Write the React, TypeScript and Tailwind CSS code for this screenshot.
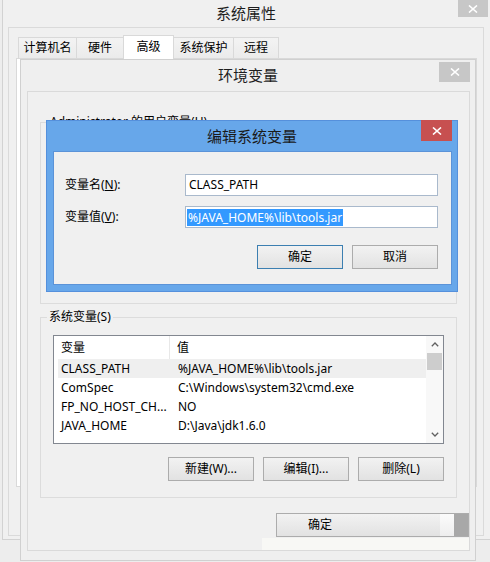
import React from 'react';

const font = "font-['Noto_Sans','Noto_Sans_CJK_SC',sans-serif]";

const CloseX = () => (
  <svg width="10" height="8" viewBox="0 0 10 8">
    <path d="M1 0.5 L9 7.5 M9 0.5 L1 7.5" stroke="#ffffff" strokeWidth="1.6" />
  </svg>
);

const ChevronUp = () => (
  <svg width="8" height="5" viewBox="0 0 8 5">
    <path d="M0.8 4.2 L4 1 L7.2 4.2" stroke="#606060" strokeWidth="1.3" fill="none" />
  </svg>
);

const ChevronDown = () => (
  <svg width="8" height="5" viewBox="0 0 8 5">
    <path d="M0.8 0.8 L4 4 L7.2 0.8" stroke="#606060" strokeWidth="1.3" fill="none" />
  </svg>
);

const Btn = ({ children, primary }: { children: React.ReactNode; primary?: boolean }) => (
  <button
    className={`h-[24px] w-[86px] border ${
      primary ? 'border-[#3c7fb1]' : 'border-[#acacac]'
    } bg-linear-to-b from-[#f2f2f2] to-[#e2e2e2] text-[12px] leading-none text-black`}
  >
    {children}
  </button>
);

const tabs = [
  { label: '计算机名', w: 'w-[59px]' },
  { label: '硬件', w: 'w-[47px]' },
  { label: '高级', w: 'w-[51px]', active: true },
  { label: '系统保护', w: 'w-[60px]' },
  { label: '远程', w: 'w-[45px]' },
];

const sysVars = [
  { name: 'CLASS_PATH', value: '%JAVA_HOME%\\lib\\tools.jar', selected: true },
  { name: 'ComSpec', value: 'C:\\Windows\\system32\\cmd.exe' },
  { name: 'FP_NO_HOST_CH...', value: 'NO' },
  { name: 'JAVA_HOME', value: 'D:\\Java\\jdk1.6.0' },
];

const App: React.FC = () => {
  return (
    <div className={`relative w-[490px] h-[562px] overflow-hidden bg-[#ededed] text-black ${font}`}>
      {/* 系统属性 (back window) */}
      <div className="absolute left-[2px] top-[-1px] w-[500px] h-[541px] border border-[#d2d2d2] bg-[#f0f0f0] flex flex-col">
        <div className="relative h-[27px] flex items-center justify-center pr-[12px] text-[15px] text-[#1e1e1e]">
          系统属性
          <div className="absolute left-[455px] top-0 w-[30px] h-[17px] bg-[#c7c7c7] flex items-center justify-center">
            <CloseX />
          </div>
        </div>
        <div className="ml-[5px] w-[476px] h-[509px] border border-[#dadada] bg-[#f0f0f0] pt-[8px]">
          <div className="flex items-end pl-[9px] h-[22px] relative z-10">
            {tabs.map((t, i) =>
              t.active ? (
                <div
                  key={t.label}
                  className={`${t.w} -ml-px h-[24px] -mb-px border border-b-0 border-[#d9d9d9] bg-white flex items-start pt-[2px] justify-center text-[12px]`}
                >
                  {t.label}
                </div>
              ) : (
                <div
                  key={t.label}
                  className={`${t.w} h-[21px] border-t border-r ${
                    i === 0 ? 'border-l' : ''
                  } border-[#d9d9d9] bg-linear-to-b from-[#f3f3f3] to-[#ebebeb] flex items-center justify-center text-[12px]`}
                >
                  {t.label}
                </div>
              )
            )}
          </div>
          <div className="ml-[7px] mr-[6px] h-[429px] border border-[#d9d9d9] bg-white" />
        </div>
      </div>

      {/* 环境变量 */}
      <div className="absolute left-[20px] top-[59px] w-[456px] h-[502px] border border-[#d0d0d0] bg-[#efefef] flex flex-col">
        <div className="relative h-[31px] flex items-center justify-center text-[15px] text-[#1e1e1e]">
          环境变量
          <div className="absolute right-[5px] top-[2px] w-[31px] h-[20px] bg-[#c7c7c7] flex items-center justify-center">
            <CloseX />
          </div>
        </div>
        <div className="ml-[6px] mr-[5px] h-[460px] border border-[#dadada] bg-[#f0f0f0] flex flex-col">
          <fieldset className="mx-[12px] mt-[22px] h-[190px] border border-[#dcdcdc]">
            <legend className="ml-[7px] px-[2px] text-[12px] leading-[16px]">Administrator 的用户变量(U)</legend>
          </fieldset>

          <fieldset className="mx-[12px] mt-[5px] border border-[#dcdcdc] pb-[16px]">
            <legend className="ml-[6px] px-[2px] text-[12px] leading-[16px]">系统变量(S)</legend>
            <div className="mx-[12px] mt-[10px] h-[109px] border border-[#828790] bg-white flex text-[12px]">
              <div className="flex-1 flex flex-col">
                <div className="h-[23px] flex">
                  <div className="w-[116px] pl-[7px] flex items-center border-r border-[#e8e8e8]">变量</div>
                  <div className="pl-[7px] flex items-center">值</div>
                </div>
                {sysVars.map((v) => (
                  <div
                    key={v.name}
                    className={`ml-[4px] h-[19px] flex items-center ${v.selected ? 'bg-[#efefef]' : ''}`}
                  >
                    <div className="w-[112px] pl-[3px] whitespace-nowrap">{v.name}</div>
                    <div className="pl-[8px] whitespace-nowrap">{v.value}</div>
                  </div>
                ))}
              </div>
              <div className="w-[17px] bg-[#f8f8f8] flex flex-col items-center">
                <div className="h-[17px] flex items-center justify-center">
                  <ChevronUp />
                </div>
                <div className="h-[17px] w-[15px] bg-[#cdcdcd]" />
                <div className="flex-1" />
                <div className="h-[17px] flex items-center justify-center">
                  <ChevronDown />
                </div>
              </div>
            </div>
            <div className="mt-[13px] mr-[12px] flex justify-end gap-[9px]">
              <Btn>新建(W)...</Btn>
              <Btn>编辑(I)...</Btn>
              <Btn>删除(L)</Btn>
            </div>
          </fieldset>

          <div className="mt-[15px] flex justify-end">
            <button className="h-[24px] w-[193px] border border-[#acacac] bg-linear-to-b from-[#f2f2f2] to-[#e2e2e2] flex items-stretch text-[12px]">
              <span className="w-[86px] flex items-center justify-center">确定</span>
              <span className="flex-1" />
              <span className="w-[14px] bg-linear-to-b from-[#fbfbfb] to-[#eeeeee]" />
              <span className="w-[14px] bg-[#a8a8a8]" />
            </button>
          </div>
          <div className="flex-1 ml-[234px] mt-[1px] bg-[#f8f8f5]" />
        </div>
      </div>

      {/* 编辑系统变量 */}
      <div className="absolute left-[46px] top-[120px] w-[412px] h-[172px] border border-[#5590dc] bg-[#67a7ea] flex flex-col">
        <div className="relative h-[30px] flex items-center justify-center text-[15px] text-[#1a1a1a]">
          编辑系统变量
          <div className="absolute right-[5px] top-[-1px] w-[31px] h-[21px] bg-[#c75050] flex items-center justify-center">
            <CloseX />
          </div>
        </div>
        <div className="ml-[6px] mr-[5px] mb-[6px] flex-1 border border-[#5b93d8] bg-[#f0f0f0] pt-[22px] pl-[11px] text-[12px]">
          <div className="flex items-center">
            <div className="w-[120px]">
              变量名(<span className="underline">N</span>):
            </div>
            <div className="w-[253px] h-[22px] border border-[#a9b9cc] bg-white flex items-center pl-[3px]">
              CLASS_PATH
            </div>
          </div>
          <div className="mt-[10px] flex items-center">
            <div className="w-[120px]">
              变量值(<span className="underline">V</span>):
            </div>
            <div className="w-[253px] h-[22px] border border-[#a9b9cc] bg-white flex items-center pl-[1px]">
              <span className="bg-[#3399ff] text-white px-[1px] leading-[17px]">%JAVA_HOME%\lib\tools.jar</span>
            </div>
          </div>
          <div className="mt-[17px] w-[373px] flex justify-end gap-[9px]">
            <Btn primary>确定</Btn>
            <Btn>取消</Btn>
          </div>
        </div>
      </div>
    </div>
  );
};

export default App;
